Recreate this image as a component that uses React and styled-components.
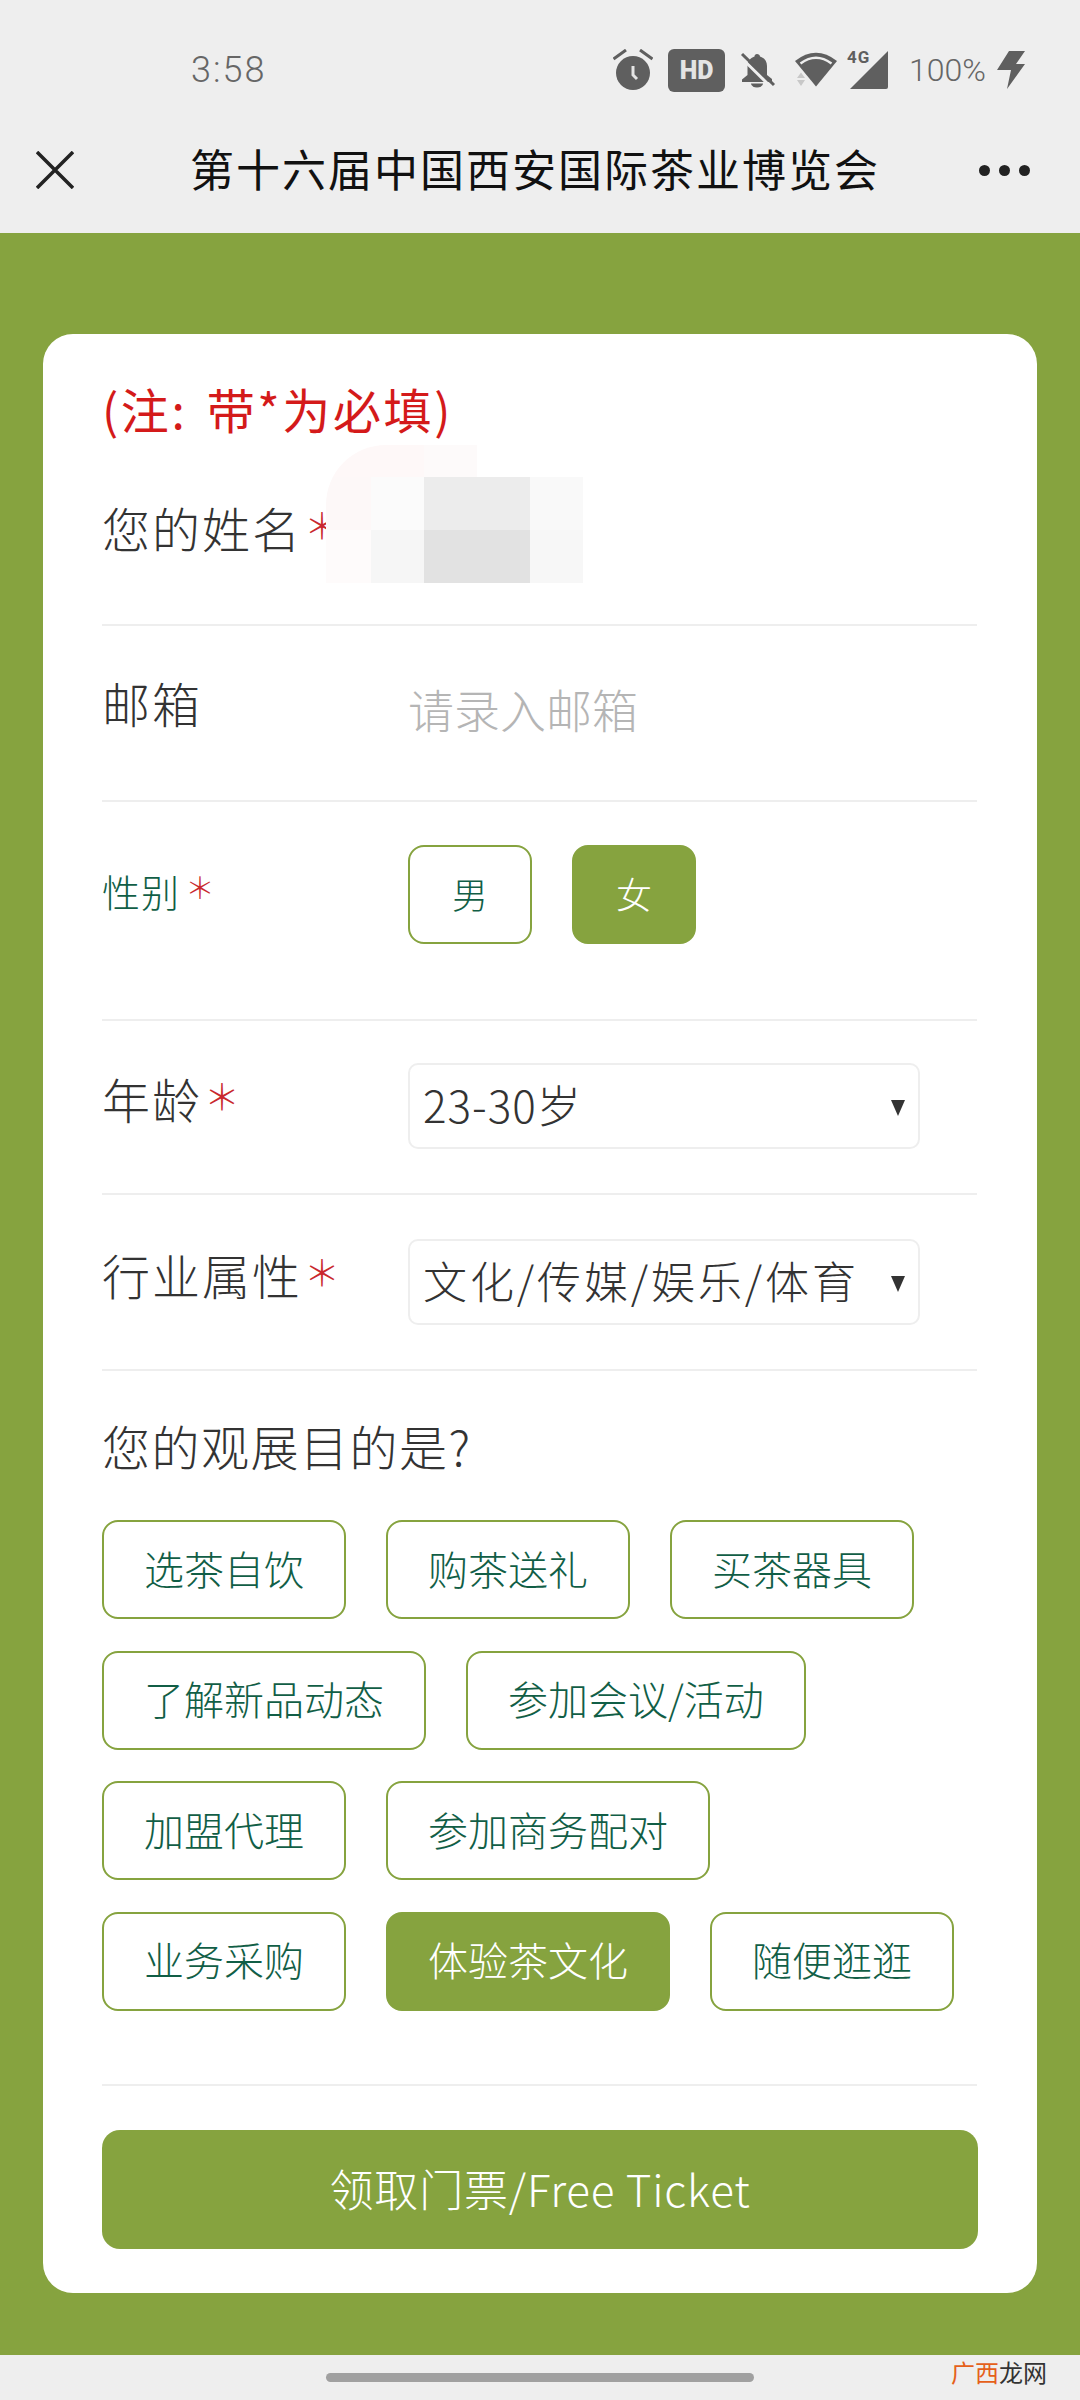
import React from "react";
import styled, { createGlobalStyle } from "styled-components";

const GREEN = "#86a33f";
const FONT = `"Noto Sans CJK SC", "Noto Sans", sans-serif`;

const GlobalStyle = createGlobalStyle`
  html, body {
    margin: 0;
    padding: 0;
    background: #eeeeee;
    font-family: ${FONT};
  }
  * { box-sizing: border-box; }
`;

const Page = styled.div`
  width: 1080px;
  height: 2400px;
  display: flex;
  flex-direction: column;
  overflow: hidden;
  background: #eeeeee;
`;

const StatusBar = styled.div`
  height: 118px;
  padding: 40px 55px 0 191px;
  display: flex;
  justify-content: space-between;
  align-items: flex-start;
  color: #666;
`;

const Clock = styled.span`
  font-family: Roboto, sans-serif;
  font-weight: 300;
  font-size: 36px;
  line-height: 40px;
  margin-top: 10px;
  letter-spacing: 2px;
`;

const StatusIcons = styled.div`
  display: flex;
  align-items: center;
  height: 60px;
`;

const Battery = styled.span`
  font-family: Roboto, sans-serif;
  font-weight: 300;
  font-size: 32px;
  line-height: 40px;
  margin: 0 11px 0 21px;
`;

const HdBadge = styled.span`
  width: 57px;
  height: 43px;
  margin: 0 15px 0 15px;
  border-radius: 6px;
  background: #5f5f5f;
  color: #e4e4e4;
  font-family: Roboto, sans-serif;
  font-weight: 900;
  font-size: 25px;
  line-height: 43px;
  text-align: center;
`;

const Signal = styled.div`
  position: relative;
  width: 41px;
  height: 38px;
`;

const SignalTag = styled.span`
  position: absolute;
  left: 0;
  top: -3px;
  font-family: Roboto, sans-serif;
  font-weight: 700;
  font-size: 17px;
  letter-spacing: 1px;
  line-height: 18px;
  color: #5f5f5f;
`;

const NavBar = styled.div`
  height: 115px;
  padding: 0 50px 11px 36px;
  display: flex;
  align-items: center;
`;

const NavTitle = styled.h1`
  margin: 0 0 4px 116px;
  font-size: 44px;
  font-weight: 400;
  line-height: 60px;
  letter-spacing: 2px;
  color: #111;
`;

const Dots = styled.div`
  margin-left: auto;
  display: flex;
  gap: 9px;
  span {
    width: 11px;
    height: 11px;
    border-radius: 50%;
    background: #222;
  }
`;

const Main = styled.main`
  height: 2122px;
  padding: 101px 43px 0;
  background: ${GREEN};
`;

const Card = styled.form`
  height: 1959px;
  padding: 44px 60px 0 59px;
  background: #fff;
  border-radius: 30px;
`;

const Note = styled.p`
  margin: 0;
  font-size: 48px;
  line-height: 60px;
  letter-spacing: 2.6px;
  word-spacing: 6px;
  color: #d41a1a;
  font-weight: 400;
`;

const Row = styled.div`
  position: relative;
  display: grid;
  grid-template-columns: 306px 1fr;
  height: ${(p) => p.$height}px;
  padding-top: ${(p) => p.$top}px;
  border-bottom: 2px solid #eeeeee;
`;

const Label = styled.label`
  margin-top: ${(p) => p.$offset || 0}px;
  font-size: ${(p) => (p.$small ? 38 : 48)}px;
  line-height: 60px;
  font-weight: 300;
  letter-spacing: ${(p) => (p.$small ? 1 : 2)}px;
  color: ${(p) => (p.$small ? "#115e46" : "#333")};
  white-space: nowrap;
`;

const Star = styled.span`
  margin-left: ${(p) => (p.$small ? 5 : 2)}px;
  font-size: ${(p) => (p.$small ? 30 : 36)}px;
  line-height: 0;
  vertical-align: 8px;
  color: #c9282d;
  letter-spacing: 0;
`;

const Placeholder = styled.span`
  margin-top: ${(p) => p.$offset || 0}px;
  font-size: 46px;
  line-height: 60px;
  font-weight: 300;
  color: #b5b5b5;
`;

const ChoiceGroup = styled.div`
  display: flex;
  gap: 40px;
`;

const Choice = styled.button`
  width: ${(p) => p.$width || "auto"};
  height: 99px;
  padding: 0 ${(p) => p.$pad ?? 40}px 4px;
  border: 2px solid ${GREEN};
  border-radius: 16px;
  background: ${(p) => (p.$active ? GREEN : "#fff")};
  color: ${(p) => (p.$active ? "#fff" : "#115e46")};
  font-family: ${FONT};
  font-size: ${(p) => p.$size || 40}px;
  font-weight: 300;
  white-space: nowrap;
`;

const Select = styled.div`
  position: relative;
  width: 512px;
  height: 86px;
  padding: 0 0 4px 13px;
  display: flex;
  align-items: center;
  border: 2px solid #eeeeee;
  border-radius: 10px;
  font-size: 44px;
  font-weight: 300;
  color: #333;
  letter-spacing: ${(p) => p.$spacing || 0}px;
  white-space: nowrap;
  &::after {
    content: "";
    position: absolute;
    right: 13px;
    top: 35px;
    border-left: 7px solid transparent;
    border-right: 7px solid transparent;
    border-top: 16px solid #333;
  }
`;

const Question = styled.h2`
  margin: 0;
  padding-top: 44px;
  font-size: 48px;
  line-height: 60px;
  letter-spacing: 1.5px;
  font-weight: 300;
  color: #333;
`;

const Chips = styled.div`
  display: flex;
  flex-wrap: wrap;
  column-gap: 40px;
  row-gap: 31.5px;
  height: 611px;
  padding-top: 45px;
  align-content: flex-start;
  border-bottom: 2px solid #eeeeee;
`;

const Submit = styled.button`
  display: block;
  width: 876px;
  height: 119px;
  margin-top: 44px;
  padding-bottom: 5px;
  border: 0;
  border-radius: 18px;
  background: ${GREEN};
  color: #fff;
  font-family: ${FONT};
  font-size: 44px;
  letter-spacing: 0.8px;
  font-weight: 300;
`;

const Mosaic = styled.div`
  position: absolute;
  left: 224px;
  top: 7px;
  display: grid;
  grid-template-columns: 45px 53px 53px 53px 53px;
  grid-template-rows: 32px 53px 53px;
  border-top-left-radius: 60px;
  overflow: hidden;
`;

const Tile = styled.div`
  background: ${(p) => p.$color};
`;

const HomeBar = styled.div`
  flex: 1;
  position: relative;
  display: flex;
  justify-content: center;
  padding-top: 18px;
`;

const HomePill = styled.div`
  width: 428px;
  height: 9px;
  border-radius: 5px;
  background: #a0a0a0;
`;

const Watermark = styled.div`
  position: absolute;
  right: 33px;
  top: 3px;
  font-size: 24px;
  line-height: 28px;
  color: #333;
  span { color: #e5601a; }
`;

const mosaicTiles = [
  "#fef8f8", "#fef8f8", "#fdfafa", "#fff", "#fff",
  "#fdf8f8", "#fbfbfb", "#ececec", "#ececec", "#f9f9f9",
  "#fefbfb", "#f6f6f6", "#e2e2e2", "#e2e2e2", "#f7f7f7",
];

const AlarmIcon = () => (
  <svg width="40" height="42" viewBox="0 0 40 42" fill="#5f5f5f">
    <circle cx="20" cy="24" r="17" />
    <path d="M.5 10 13 1M39.500 10 27 1" fill="none" stroke="#5f5f5f" strokeWidth="3" />
    <path d="M20 17v9l4 4" fill="none" stroke="#e4e4e4" strokeWidth="3" />
  </svg>
);

const BellOffIcon = () => (
  <svg width="36" height="36" viewBox="0 0 36 36" fill="#5f5f5f" style={{ marginRight: 19 }}>
    <path d="M17 2c-1.500 0-2.500 1-2.500 2.500-4.500 1.500-7 5-7 9.500v9L2 27.500V30h30v-3l-5-4v-9c0-4.500-2.500-8-7-9.500C20 3 18.500 2 17 2Z" />
    <path d="M11 31.500h12a6 4 0 0 1-12 0Z" />
    <path d="M0 4.500 31 35" fill="none" stroke="#eeeeee" strokeWidth="3" />
    <path d="M2 2 34 33" fill="none" stroke="#5f5f5f" strokeWidth="3" />
  </svg>
);

const WifiIcon = () => (
  <svg width="42" height="36" viewBox="0 0 42 36" style={{ marginRight: 10 }}>
    <path d="M0 9Q21-7.500 42 9L21 34.500Z" fill="#5f5f5f" />
    <path d="M5.500 11.500Q21 0 36.500 11.500" fill="none" stroke="#eeeeee" strokeWidth="2.500" />
    <path d="M6 20.500 10 26H2ZM6 34 2 28H10Z" fill="#c8c8c8" />
  </svg>
);

const SignalIcon = () => (
  <Signal>
    <svg width="41" height="38" viewBox="0 0 41 38">
      <path d="M41 0v36a2 2 0 0 1-2 2H3Z" fill="#5f5f5f" />
    </svg>
    <SignalTag>4G</SignalTag>
  </Signal>
);

const BoltIcon = () => (
  <svg width="28" height="38" viewBox="0 0 28 38" fill="#5f5f5f">
    <path d="M12 0h16L19 13h9L10 38l4-19H0Z" />
  </svg>
);

const CloseIcon = () => (
  <svg width="38" height="38" viewBox="0 0 38 38" fill="none" stroke="#222" strokeWidth="3.500">
    <path d="M1 1 37 37M37 1 1 37" />
  </svg>
);

const purposes = [
  "选茶自饮", "购茶送礼", "买茶器具",
  "了解新品动态", "参加会议/活动",
  "加盟代理", "参加商务配对",
  "业务采购", "体验茶文化", "随便逛逛",
];

export default function App() {
  return (
    <Page>
      <GlobalStyle />
      <StatusBar>
        <Clock>3:58</Clock>
        <StatusIcons>
          <AlarmIcon />
          <HdBadge>HD</HdBadge>
          <BellOffIcon />
          <WifiIcon />
          <SignalIcon />
          <Battery>100%</Battery>
          <BoltIcon />
        </StatusIcons>
      </StatusBar>
      <NavBar>
        <CloseIcon />
        <NavTitle>第十六届中国西安国际茶业博览会</NavTitle>
        <Dots><span /><span /><span /></Dots>
      </NavBar>
      <Main>
        <Card>
          <Note>(注: 带*为必填)</Note>
          <Row $height={188} $top={59}>
            <Label>您的姓名<Star>＊</Star></Label>
            <Mosaic>
              {mosaicTiles.map((color, i) => <Tile key={i} $color={color} />)}
            </Mosaic>
          </Row>
          <Row $height={176} $top={46}>
            <Label>邮箱</Label>
            <Placeholder $offset={6}>请录入邮箱</Placeholder>
          </Row>
          <Row $height={219} $top={43}>
            <Label $small $offset={16}>性别<Star $small>＊</Star></Label>
            <ChoiceGroup>
              <Choice $width="124px" $pad={0} $size={36}>男</Choice>
              <Choice $width="124px" $pad={0} $size={36} $active>女</Choice>
            </ChoiceGroup>
          </Row>
          <Row $height={174} $top={42}>
            <Label $offset={5}>年龄<Star>＊</Star></Label>
            <Select $spacing={1}>23-30岁</Select>
          </Row>
          <Row $height={176} $top={44}>
            <Label $offset={5}>行业属性<Star>＊</Star></Label>
            <Select $spacing={2.9}>文化/传媒/娱乐/体育</Select>
          </Row>
          <Question>您的观展目的是?</Question>
          <Chips>
            {purposes.map((text) => (
              <Choice key={text} $active={text === "体验茶文化"}>{text}</Choice>
            ))}
          </Chips>
          <Submit type="button">领取门票/Free Ticket</Submit>
        </Card>
      </Main>
      <HomeBar>
        <HomePill />
        <Watermark><span>广西</span>龙网</Watermark>
      </HomeBar>
    </Page>
  );
}
